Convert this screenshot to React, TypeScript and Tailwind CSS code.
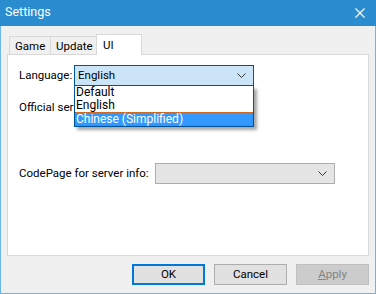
import React from 'react'

const font = { fontFamily: 'Roboto, "Liberation Sans", Arial, sans-serif' }

const Chevron: React.FC<{ color?: string }> = ({ color = '#333' }) => (
  <svg width="9" height="5" viewBox="0 0 9 5" className="block">
    <polyline points="0.5,0.5 4.5,4.5 8.5,0.5" fill="none" stroke={color} strokeWidth="1" />
  </svg>
)

const Tab: React.FC<{ label: string; width: string; active?: boolean; first?: boolean }> = ({
  label,
  width,
  active,
  first
}) => {
  if (active) {
    return (
      <div
        className={`relative z-10 -mb-px h-[21px] ${width} border-x border-t border-[#d9d9d9] bg-white pl-[6px] pt-[2px] leading-[17px]`}
      >
        {label}
      </div>
    )
  }
  return (
    <div
      className={`h-[18px] ${width} ${first ? 'ml-[2px]' : ''} whitespace-nowrap border-l border-t border-[#d9d9d9] bg-[#f0f0f0] pl-[5px] pt-[1px] leading-[16px]`}
    >
      {label}
    </div>
  )
}

const Button: React.FC<{ children: React.ReactNode; variant?: 'default' | 'disabled' | 'normal' }> = ({
  children,
  variant = 'normal'
}) => {
  const cls =
    variant === 'default'
      ? 'border-2 border-[#0078d7] bg-[#e1e1e1] text-black'
      : variant === 'disabled'
        ? 'border border-[#bfbfbf] bg-[#cccccc] text-[#838383]'
        : 'border border-[#adadad] bg-[#e1e1e1] text-black'
  return (
    <div className={`flex h-[21px] w-[73px] items-center justify-center ${cls}`}>{children}</div>
  )
}

export default function App() {
  return (
    <div className="h-[294px] w-[376px] text-[11.5px] text-black" style={font}>
      {/* title bar */}
      <div className="flex h-[26px] items-center justify-between bg-[#2b8ccf] pl-[5px] pr-[11px] text-[12.5px] text-white">
        <span className="-mt-[1px]">Settings</span>
        <svg width="10" height="10" viewBox="0 0 10 10">
          <path d="M0.5 0.5 L9.5 9.5 M9.5 0.5 L0.5 9.5" stroke="#fff" strokeWidth="1.2" />
        </svg>
      </div>

      <div className="flex h-[268px] flex-col border-x border-b border-[#6cb5ea] bg-[#f0f0f0] px-[6px] pt-[8px]">
        {/* tabs */}
        <div className="flex items-end">
          <Tab label="Game" width="w-[41px]" first />
          <Tab label="Update" width="w-[46px]" />
          <Tab label="UI" width="w-[46px]" active />
        </div>

        {/* panel */}
        <div className="flex h-[202px] flex-col border border-[#d9d9d9] bg-white pl-[11px] pt-[10px]">
          <div className="relative flex items-center">
            <span className="w-[55px] shrink-0 whitespace-nowrap">Language:</span>
            <div className="flex h-[21px] w-[180px] items-center justify-between border border-[#005499] bg-[#cce4f7] pl-[3px] pr-[7px]">
              <span>English</span>
              <Chevron />
            </div>
            <div className="absolute left-[55px] top-[21px] z-20 flex w-[180px] flex-col border border-t-0 border-[#005499] bg-white text-[12px] leading-[13px] shadow-[3px_3px_3px_rgba(0,0,0,0.35)]">
              <div className="h-[13px] pl-[1px]">Default</div>
              <div className="h-[13px] pl-[1px]">English</div>
              <div className="h-[14px] border border-dotted border-[#c8641e] bg-[#3399ff] text-white">
                Chinese (Simplified)
              </div>
            </div>
          </div>

          <div className="mt-[11px] flex h-[21px] items-center">
            <span className="whitespace-nowrap">Official server list:</span>
          </div>

          <div className="mt-[45px] flex items-center">
            <span className="w-[136px] shrink-0 whitespace-nowrap">CodePage for server info:</span>
            <div className="flex h-[21px] w-[180px] items-center justify-end border border-[#adadad] bg-[#e5e5e5] pr-[7px]">
              <Chevron />
            </div>
          </div>
        </div>

        {/* buttons */}
        <div className="mt-[8px] flex justify-end gap-[9px]">
          <Button variant="default">OK</Button>
          <Button>Cancel</Button>
          <Button variant="disabled">
            <span>
              <span className="underline">A</span>pply
            </span>
          </Button>
        </div>
      </div>
    </div>
  )
}
